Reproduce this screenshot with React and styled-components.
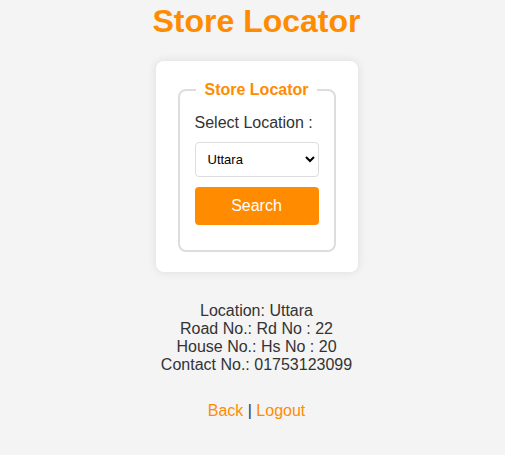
import styled, { createGlobalStyle } from "styled-components";

const laranja = "#ff8c00";

const Global = createGlobalStyle`
    body {
        margin: 0;
        background-color: #f4f4f4;
        font-family: Arial, "Liberation Sans", sans-serif;
        color: #333;
    }
`

const Pagina = styled.div`
    display: flex;
    flex-direction: column;
    align-items: center;
    padding: 4px 0 0 8px;
`

const Titulo = styled.h1`
    color: ${laranja};
    font-size: 32px;
    font-weight: 700;
    margin: 0 0 23px;
    line-height: 34px;
`

const Cartao = styled.div`
    background-color: #fff;
    border-radius: 8px;
    box-shadow: 0 0 10px rgba(0,0,0,.1);
    padding: 20px 22px;
    box-sizing: border-box;
    width: 202px;
`

const Grupo = styled.fieldset`
    border: 2px solid #ddd;
    border-radius: 8px;
    margin: 0;
    padding: 15px 15px 25px;
    display: flex;
    flex-direction: column;
`

const Legenda = styled.legend`
    color: ${laranja};
    font-weight: 700;
    font-size: 16px;
    padding: 0 8px;
    margin: 0 auto;
`

const Rotulo = styled.label`
    font-size: 16px;
    color: #333;
    margin-bottom: 10px;
`

const Selecao = styled.select`
    height: 35px;
    width: 100%;
    border: 1px solid #ddd;
    border-radius: 4px;
    padding: 0 8px;
    font-family: Arial, "Liberation Sans", sans-serif;
    font-size: 13px;
    color: #000;
    background: #fff;
    margin-bottom: 10px;
`

const Botao = styled.button`
    height: 38px;
    width: 100%;
    border: none;
    border-radius: 4px;
    background-color: ${laranja};
    color: #fff;
    font-family: Arial, "Liberation Sans", sans-serif;
    font-size: 16px;
`

const Info = styled.div`
    margin-top: 30px;
    text-align: center;
    font-size: 16px;
    line-height: 18px;
    color: #333;
`

const Links = styled.p`
    margin: 28px 0 0;
    font-size: 16px;
    color: #333;

    a {
        color: ${laranja};
        text-decoration: none;
    }
`

const App = () => {
    return (
        <Pagina>
            <Global />
            <Titulo>Store Locator</Titulo>
            <Cartao>
                <Grupo>
                    <Legenda>Store Locator</Legenda>
                    <Rotulo htmlFor="local">Select Location :</Rotulo>
                    <Selecao id="local" defaultValue="Uttara">
                        <option>Uttara</option>
                        <option>Dhanmondi</option>
                        <option>Gulshan</option>
                    </Selecao>
                    <Botao type="button">Search</Botao>
                </Grupo>
            </Cartao>
            <Info>
                Location: Uttara<br />
                Road No.: Rd No : 22<br />
                House No.: Hs No : 20<br />
                Contact No.: 01753123099
            </Info>
            <Links>
                <a href="#">Back</a> | <a href="#">Logout</a>
            </Links>
        </Pagina>
    );
}

export default App
